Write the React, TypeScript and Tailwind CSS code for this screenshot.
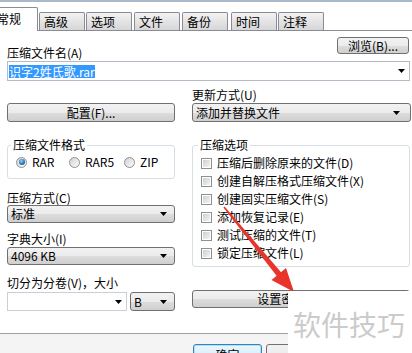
import type { ReactNode } from 'react';

const btnFace =
    'rounded-[3px] border border-[#707070] bg-[linear-gradient(#f2f2f2_0%,#ebebeb_50%,#dddddd_51%,#cfcfcf_100%)]';

const Caret = () => (
    <svg width="7" height="4" viewBox="0 0 7 4" className="shrink-0">
        <path d="M0 0h7L3.5 4z" fill="#000" />
    </svg>
);

const Combo = ({ children, className = '' }: { children?: ReactNode; className?: string }) => (
    <div className={`flex items-center justify-between pl-[3px] pr-[7px] ${btnFace} ${className}`}>
        <span className="leading-[14px]">{children}</span>
        <Caret />
    </div>
);

const Button = ({ children, className = '' }: { children: ReactNode; className?: string }) => (
    <div className={`flex items-center justify-center ${btnFace} ${className}`}>
        <span className="leading-[14px]">{children}</span>
    </div>
);

const Radio = ({ checked = false }: { checked?: boolean }) => (
    <span className="flex h-[11px] w-[11px] shrink-0 items-center justify-center rounded-full border border-[#8e8f8f] bg-[linear-gradient(135deg,#d2d2d2,#fcfcfc)]">
        {checked && (
            <span className="h-[6px] w-[6px] rounded-full bg-[radial-gradient(circle_at_40%_35%,#8fd0ff,#1f6fb2_60%,#0d4a80)]" />
        )}
    </span>
);

const Checkbox = () => (
    <span className="flex h-[11px] w-[11px] shrink-0 items-center justify-center border border-[#8e8f8f] bg-white">
        <span className="h-[7px] w-[7px] bg-[linear-gradient(135deg,#cfcfcf,#f4f4f4)]" />
    </span>
);

const tabs = [
    { label: '高级', ml: 'ml-[1px]' },
    { label: '选项', ml: 'ml-[1px]' },
    { label: '文件', ml: 'ml-[2px]' },
    { label: '备份', ml: 'ml-[2px]' },
    { label: '时间', ml: 'ml-[3px]' },
    { label: '注释', ml: 'ml-[1px]' },
];

const options = [
    '压缩后删除原来的文件(D)',
    '创建自解压格式压缩文件(X)',
    '创建固实压缩文件(S)',
    '添加恢复记录(E)',
    '测试压缩的文件(T)',
    '锁定压缩文件(L)',
];

export default function App() {
    return (
        <div className="relative h-[353px] w-[412px] overflow-hidden bg-white font-['Noto_Sans_CJK_SC','Noto_Sans',sans-serif] text-[12px] text-black">
            <div className="h-[2px] bg-[#a9b9ca]" />

            {/* Tabs */}
            <div className="flex h-[29px] items-end border-b border-[#898c95]">
                <div className="relative z-10 -mb-px ml-[-8px] h-[24px] w-[46px] rounded-t-[2px] border border-b-0 border-[#898c95] bg-white pl-[4px] pt-[4px] leading-[14px]">
                    常规
                </div>
                {tabs.map((t) => (
                    <div
                        key={t.label}
                        className={`h-[18px] w-[46px] rounded-t-[2px] border border-b-0 border-[#898c95] bg-[linear-gradient(#f3f3f3,#e4e4e4_50%,#d6d6d6)] pl-[4px] pt-[2px] leading-[14px] ${t.ml}`}
                    >
                        {t.label}
                    </div>
                ))}
            </div>

            <div className="pl-[7px] pr-[1px]">
                <div className="mt-[6px] flex items-start justify-between">
                    <span className="mt-[9px] leading-[14px]">压缩文件名(A)</span>
                    <Button className="mr-[2px] h-[17px] w-[72px]">浏览(B)...</Button>
                </div>

                <div className="mr-[1px] mt-px flex h-[20px] items-center justify-between border border-[#b5bcc7] bg-white pl-px pr-[4px]">
                    <span className="bg-[#3399ff] leading-[13px] text-white">识字2姓氏歌.rar</span>
                    <Caret />
                </div>

                <div className="flex">
                    {/* Left column */}
                    <div className="w-[168px] pt-[22px]">
                        <Button className="h-[19px] w-full">配置(F)...</Button>

                        <fieldset className="mt-[16px] rounded-[3px] border border-[#d5dfe5] pb-[9px]">
                            <legend className="ml-[3px] px-[2px] leading-[14px]">压缩文件格式</legend>
                            <div className="mt-[3px] flex h-[14px] items-center pl-[8px]">
                                <label className="flex w-[53px] items-center gap-[5px]">
                                    <Radio checked />
                                    <span className="leading-[14px]">RAR</span>
                                </label>
                                <label className="flex w-[55px] items-center gap-[5px]">
                                    <Radio />
                                    <span className="leading-[14px]">RAR5</span>
                                </label>
                                <label className="flex items-center gap-[5px]">
                                    <Radio />
                                    <span className="leading-[14px]">ZIP</span>
                                </label>
                            </div>
                        </fieldset>

                        <div className="mt-[12px] leading-[14px]">压缩方式(C)</div>
                        <Combo className="h-[18px]">标准</Combo>

                        <div className="mt-[9px] leading-[14px]">字典大小(I)</div>
                        <Combo className="mt-[1px] h-[18px]">4096 KB</Combo>

                        <div className="mt-[11px] leading-[14px]">切分为分卷(V)，大小</div>
                        <div className="mt-[2px] flex h-[19px]">
                            <div className="flex w-[120px] items-center justify-end border border-[#c9cfd8] bg-white pr-[4px]">
                                <Caret />
                            </div>
                            <Combo className="ml-[3px] w-[45px]">B</Combo>
                        </div>
                    </div>

                    {/* Right column */}
                    <div className="ml-[17px] flex-1">
                        <div className="mt-[7px] leading-[14px]">更新方式(U)</div>
                        <Combo className="mt-[1px] h-[19px] pr-[10px]">添加并替换文件</Combo>

                        <fieldset className="mr-[1px] mt-[16px] rounded-[3px] border border-[#d5dfe5] pb-[4px]">
                            <legend className="ml-[5px] px-[2px] leading-[14px]">压缩选项</legend>
                            <div className="mt-[2px] pl-[8px]">
                                {options.map((o) => (
                                    <label key={o} className="flex h-[18px] items-center gap-[5px]">
                                        <Checkbox />
                                        <span className="leading-[14px]">{o}</span>
                                    </label>
                                ))}
                            </div>
                        </fieldset>

                        <Button className="mr-[1px] mt-[23px] h-[18px] pr-[14px]">设置密码(P)...</Button>
                    </div>
                </div>
            </div>

            <div className="mt-[22px] h-px bg-[#a0a0a0]" />
            <div className="h-[40px] bg-[#f4f4f4] pl-[193px] pt-[10px]">
                <div className="flex">
                    <div className="flex h-[23px] w-[69px] items-start justify-center rounded-[3px] border border-[#3c7fb1] bg-[linear-gradient(#eaf6fd,#d9f0fc_50%,#bee6fd_51%,#a7d9f5)] pt-[3px] leading-[14px] shadow-[inset_0_0_0_1px_#a6e4fb]">
                        确定
                    </div>
                    <div className={`ml-[4px] h-[23px] w-[69px] ${btnFace}`} />
                </div>
            </div>

            {/* Red arrow annotation */}
            <svg className="pointer-events-none absolute inset-0" width="412" height="353" viewBox="0 0 412 353">
                <polygon points="223.4,207.5 224.6,206.5 281.5,272.8 277,276.2" fill="#e8342b" />
                <polygon points="294,292 271.5,280 286,268" fill="#e8342b" />
            </svg>

            {/* Watermark */}
            <div className="absolute bottom-0 left-[288px] right-0 top-[291px] bg-white pl-[5px] pt-[17px] text-[28px] leading-[32px] text-[#cbcbcb]">
                软件技巧
            </div>
        </div>
    );
}
